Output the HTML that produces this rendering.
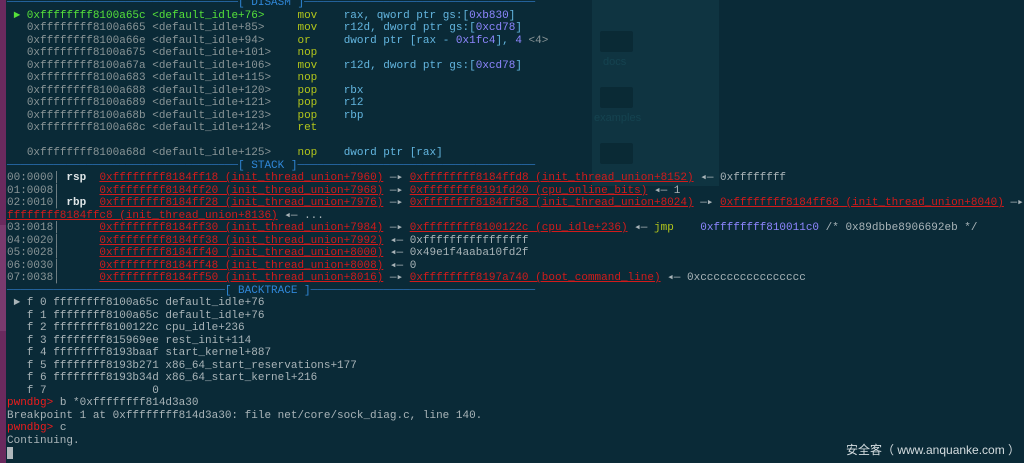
<!DOCTYPE html>
<html><head><meta charset="utf-8"><style>
html,body{margin:0;padding:0;width:1024px;height:463px;overflow:hidden;background:#0a2a37;}
#bar{position:absolute;left:0;top:0;width:6px;height:463px;background:#6a2a5e;}
#bar2{position:absolute;left:0;top:225px;width:6px;height:106px;background:#7a3a6e;}
.desk{position:absolute;left:592px;top:0;width:127px;height:186px;background:#0f3441;}
.fold{position:absolute;left:600px;width:33px;height:21px;background:#0a2a35;border-radius:2px;}
.dl{position:absolute;font:11px "Liberation Sans",sans-serif;color:#154350;}
pre{position:absolute;left:7px;top:-2.75px;margin:0;font:11px/12.5px "Liberation Mono",monospace;color:#a9b4b8;white-space:pre;}
.h{color:#2b72b8}.ht{color:#2f86d6}
.g{color:#55e03a}.a{color:#8a9597}.m{color:#b3c61b}.o{color:#63b6e0}.p{color:#8e86ff}
.r{color:#d21b1b;text-decoration:underline}.w{color:#e0e6e8;font-weight:bold}.rd{color:#ee1c1c}
.cur{display:inline-block;width:6px;height:12px;background:#b0b8bc;vertical-align:-2px}
#wm{position:absolute;left:846px;top:441px;white-space:nowrap;font:12px "Liberation Sans","Noto Sans CJK SC",sans-serif;color:#d5dde0;}
</style></head><body>
<div id="bar"></div><div id="bar2"></div>
<div class="desk"></div>
<div class="fold" style="top:31px"></div><div class="fold" style="top:87px"></div><div class="fold" style="top:143px"></div>
<div class="dl" style="left:603px;top:56px">docs</div>
<div class="dl" style="left:594px;top:112px">examples</div>
<pre><span class="h">───────────────────────────────────</span><span class="ht">[ DISASM ]</span><span class="h">───────────────────────────────────</span>
 <span class="g">► 0xffffffff8100a65c &lt;default_idle+76&gt;</span>     <span class="m">mov</span>    <span class="o">rax, qword ptr gs:[<span class="p">0xb830</span>]</span>
   <span class="a">0xffffffff8100a665 &lt;default_idle+85&gt;</span>     <span class="m">mov</span>    <span class="o">r12d, dword ptr gs:[<span class="p">0xcd78</span>]</span>
   <span class="a">0xffffffff8100a66e &lt;default_idle+94&gt;</span>     <span class="m">or</span>     <span class="o">dword ptr [rax - <span class="p">0x1fc4</span>], <span class="p">4</span></span> <span class="a">&lt;4&gt;</span>
   <span class="a">0xffffffff8100a675 &lt;default_idle+101&gt;</span>    <span class="m">nop</span>
   <span class="a">0xffffffff8100a67a &lt;default_idle+106&gt;</span>    <span class="m">mov</span>    <span class="o">r12d, dword ptr gs:[<span class="p">0xcd78</span>]</span>
   <span class="a">0xffffffff8100a683 &lt;default_idle+115&gt;</span>    <span class="m">nop</span>
   <span class="a">0xffffffff8100a688 &lt;default_idle+120&gt;</span>    <span class="m">pop</span>    <span class="o">rbx</span>
   <span class="a">0xffffffff8100a689 &lt;default_idle+121&gt;</span>    <span class="m">pop</span>    <span class="o">r12</span>
   <span class="a">0xffffffff8100a68b &lt;default_idle+123&gt;</span>    <span class="m">pop</span>    <span class="o">rbp</span>
   <span class="a">0xffffffff8100a68c &lt;default_idle+124&gt;</span>    <span class="m">ret</span>

   <span class="a">0xffffffff8100a68d &lt;default_idle+125&gt;</span>    <span class="m">nop</span>    <span class="o">dword ptr [rax]</span>
<span class="h">───────────────────────────────────</span><span class="ht">[ STACK ]</span><span class="h">────────────────────────────────────</span>
<span class="a">00:0000│</span> <span class="w">rsp</span>  <span class="r">0xffffffff8184ff18 (init_thread_union+7960)</span> —▸ <span class="r">0xffffffff8184ffd8 (init_thread_union+8152)</span> ◂— 0xffffffff
<span class="a">01:0008│</span>      <span class="r">0xffffffff8184ff20 (init_thread_union+7968)</span> —▸ <span class="r">0xffffffff8191fd20 (cpu_online_bits)</span> ◂— 1
<span class="a">02:0010│</span> <span class="w">rbp</span>  <span class="r">0xffffffff8184ff28 (init_thread_union+7976)</span> —▸ <span class="r">0xffffffff8184ff58 (init_thread_union+8024)</span> —▸ <span class="r">0xffffffff8184ff68 (init_thread_union+8040)</span> —▸
<span class="r">ffffffff8184ffc8 (init_thread_union+8136)</span> ◂— ...
<span class="a">03:0018│</span>      <span class="r">0xffffffff8184ff30 (init_thread_union+7984)</span> —▸ <span class="r">0xffffffff8100122c (cpu_idle+236)</span> ◂— <span class="m">jmp</span>    <span class="p">0xffffffff810011c0</span> /* 0x89dbbe8906692eb */
<span class="a">04:0020│</span>      <span class="r">0xffffffff8184ff38 (init_thread_union+7992)</span> ◂— 0xffffffffffffffff
<span class="a">05:0028│</span>      <span class="r">0xffffffff8184ff40 (init_thread_union+8000)</span> ◂— 0x49e1f4aaba10fd2f
<span class="a">06:0030│</span>      <span class="r">0xffffffff8184ff48 (init_thread_union+8008)</span> ◂— 0
<span class="a">07:0038│</span>      <span class="r">0xffffffff8184ff50 (init_thread_union+8016)</span> —▸ <span class="r">0xffffffff8197a740 (boot_command_line)</span> ◂— 0xcccccccccccccccc
<span class="h">─────────────────────────────────</span><span class="ht">[ BACKTRACE ]</span><span class="h">──────────────────────────────────</span>
 ► f 0 ffffffff8100a65c default_idle+76
   f 1 ffffffff8100a65c default_idle+76
   f 2 ffffffff8100122c cpu_idle+236
   f 3 ffffffff815969ee rest_init+114
   f 4 ffffffff8193baaf start_kernel+887
   f 5 ffffffff8193b271 x86_64_start_reservations+177
   f 6 ffffffff8193b34d x86_64_start_kernel+216
   f 7                0
<span class="rd">pwndbg&gt;</span> b *0xffffffff814d3a30
Breakpoint 1 at 0xffffffff814d3a30: file net/core/sock_diag.c, line 140.
<span class="rd">pwndbg&gt;</span> c
Continuing.
<span class="cur"></span></pre>
<div id="wm">安全客（ www.anquanke.com ）</div>
</body></html>
